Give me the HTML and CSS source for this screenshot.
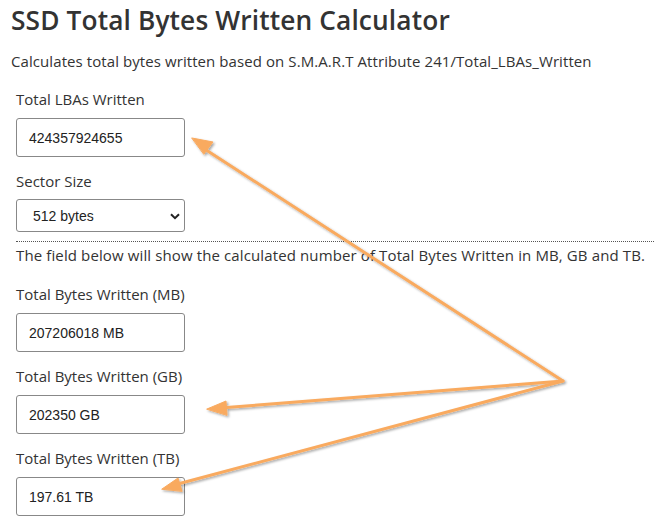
FILE: index.html
```html
<!DOCTYPE html>
<html>
<head>
<meta charset="utf-8">
<link rel="stylesheet" href="styles.css">
</head>
<body>
<div class="page">
  <h1 class="title">SSD Total Bytes Written Calculator</h1>
  <p class="intro">Calculates total bytes written based on S.M.A.R.T Attribute 241/Total_LBAs_Written</p>
  <div class="form">
    <div class="group">
      <label class="label">Total LBAs Written</label>
      <div class="field">424357924655</div>
    </div>
    <div class="group">
      <label class="label">Sector Size</label>
      <div class="field select">512 bytes
        <svg class="chev" width="10" height="7" viewBox="0 0 10 7"><path d="M1 1.2 L5 5.2 L9 1.2" fill="none" stroke="#222" stroke-width="2"/></svg>
      </div>
    </div>
    <div class="divider"></div>
    <p class="note">The field below will show the calculated number of Total Bytes Written in MB, GB and TB.</p>
    <div class="group">
      <label class="label">Total Bytes Written (MB)</label>
      <div class="field">207206018 MB</div>
    </div>
    <div class="group">
      <label class="label">Total Bytes Written (GB)</label>
      <div class="field">202350 GB</div>
    </div>
    <div class="group">
      <label class="label">Total Bytes Written (TB)</label>
      <div class="field">197.61 TB</div>
    </div>
  </div>
  <svg class="arrows" width="655" height="518" viewBox="0 0 655 518">
    <defs>
      <filter id="sh" x="-10%" y="-10%" width="120%" height="120%">
        <feDropShadow dx="1.5" dy="1.5" stdDeviation="1" flood-color="#000" flood-opacity="0.35"/>
      </filter>
    </defs>
    <g filter="url(#sh)" fill="#f9aa5f" stroke="#f9aa5f" stroke-width="3" stroke-linecap="round" stroke-linejoin="round">
      <polyline points="200,146 563,381 220,408" fill="none"/>
      <line x1="563" y1="381" x2="174" y2="485"/>
      <polygon points="192,138 213,142 204,154" stroke-width="1"/>
      <polygon points="207,409 226,401 227,415" stroke-width="1"/>
      <polygon points="162,489 178,478 182,491" stroke-width="1"/>
    </g>
  </svg>
</div>
</body>
</html>
```
FILE: styles.css
```css
html, body {
  margin: 0;
  padding: 0;
  background: #fff;
}
.page {
  position: relative;
  width: 655px;
  height: 518px;
  overflow: hidden;
  padding: 3px 0 0 11px;
  box-sizing: border-box;
  font-family: "Open Sans", "Noto Sans", sans-serif;
  color: #333;
}
.title {
  margin: 0;
  font-size: 26.3px;
  line-height: 34px;
  font-weight: 600;
  color: #333;
  letter-spacing: 0.12px;
}
.intro {
  margin: 14px 0 0 0;
  font-size: 15px;
  line-height: 20px;
  color: #333;
  letter-spacing: 0.08px;
}
.form {
  padding-left: 5px;
  margin-top: 18px;
  display: flex;
  flex-direction: column;
}
.group {
  display: flex;
  flex-direction: column;
  align-items: flex-start;
}
.group + .group {
  margin-top: 14px;
}
.label {
  font-size: 15px;
  line-height: 20px;
  color: #333;
}
.field {
  margin-top: 9px;
  width: 169px;
  height: 39px;
  box-sizing: border-box;
  border: 1px solid #888;
  border-radius: 3px;
  padding: 0 0 0 12px;
  display: flex;
  align-items: center;
  font-family: "Liberation Sans", Arial, sans-serif;
  font-size: 14px;
  color: #222;
}
.select {
  margin-top: 8px;
  height: 33px;
  padding-left: 16px;
  position: relative;
}
.chev {
  position: absolute;
  right: 4px;
  top: 13px;
}
.divider {
  margin-top: 9px;
  border-top: 1px dotted #555;
  width: 640px;
}
.note {
  margin: 3px 0 19px 0;
  font-size: 15px;
  line-height: 20px;
  letter-spacing: 0.12px;
}
.arrows {
  position: absolute;
  left: 0;
  top: 0;
  pointer-events: none;
}
```
